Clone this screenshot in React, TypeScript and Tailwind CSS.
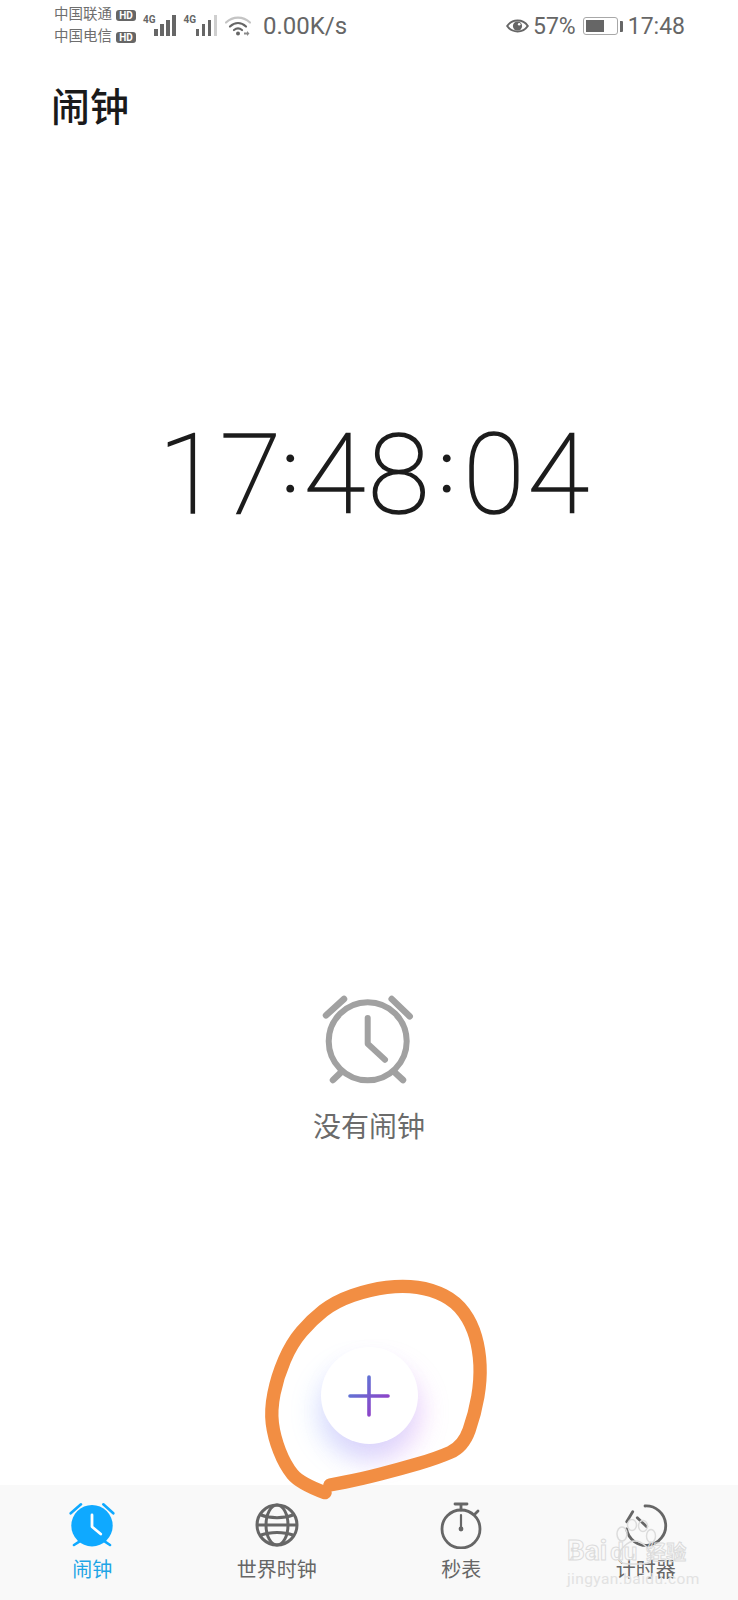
const CJK = "font-['Roboto','Noto_Sans_CJK_SC',sans-serif]";

function smooth(pts: number[][]) {
  let d = `M${pts[0][0]} ${pts[0][1]}`;
  for (let i = 1; i < pts.length - 1; i++) {
    const mx = (pts[i][0] + pts[i + 1][0]) / 2;
    const my = (pts[i][1] + pts[i + 1][1]) / 2;
    d += ` Q${pts[i][0]} ${pts[i][1]} ${mx} ${my}`;
  }
  const last = pts[pts.length - 1];
  return d + ` L${last[0]} ${last[1]}`;
}

const scribble = [
  [225, 668], [150, 640], [105, 585], [72, 500], [62, 420], [82, 320], [125, 220], [185, 150], [255, 95],
  [360, 58], [460, 46], [545, 58], [618, 95], [665, 160], [688, 240], [692, 330], [675, 430], [640, 530],
  [560, 565], [450, 597], [330, 628], [240, 645],
];

function Signal({ level }: { level: number }) {
  const hs = [7, 12, 16, 21];
  return (
    <div className="flex items-end gap-[2.5px] h-[21px]">
      {hs.map((h, i) => (
        <div
          key={h}
          className={i < level ? "w-[3.500px] bg-[#666666]" : "w-[3.500px] bg-[#cfcfcf]"}
          style={{ height: h }}
        />
      ))}
    </div>
  );
}

function Carrier({ name }: { name: string }) {
  return (
    <div className="flex items-center gap-[4px] h-[22px]">
      <span className="text-[14.5px] leading-none text-[#6e6e6e]">{name}</span>
      <span className="w-[20px] h-[11px] rounded-[3px] bg-[#666666] text-white text-[10px] leading-[11px] font-bold text-center">
        HD
      </span>
    </div>
  );
}

function StatusBar() {
  return (
    <div className="flex items-center justify-between h-[52px] pl-[54px] pr-[53px] text-[#666666]">
      <div className="flex items-center">
        <div className="flex flex-col">
          <Carrier name="中国联通" />
          <Carrier name="中国电信" />
        </div>
        <div className="flex items-start ml-[7px] h-[22px]">
          <span className="w-[11px] text-[10px] leading-[10px] font-bold">4G</span>
          <Signal level={4} />
          <span className="w-[12px] ml-[8px] text-[10px] leading-[10px] font-bold">4G</span>
          <Signal level={3} />
        </div>
        <svg className="ml-[8px]" width="26" height="20" viewBox="0 0 26 20" fill="none">
          <path d="M1 6.500C8 0 18 0 25 6.500" stroke="#c4c4c4" strokeWidth="2.200" strokeLinecap="round" />
          <path d="M5 10.500C10 6 16 6 21 10.500" stroke="#666666" strokeWidth="2.200" strokeLinecap="round" />
          <path d="M9 14C11.500 12 14.500 12 17 14" stroke="#666666" strokeWidth="2.200" strokeLinecap="round" />
          <circle cx="13" cy="17.500" r="2" fill="#666666" />
          <path d="M19 16.500h3v-1.500l2.500 2.500-2.500 2.500v-1.500h-3z" fill="#8a8a8a" />
        </svg>
        <span className="ml-[12px] text-[24px] leading-none">0.00K/s</span>
      </div>
      <div className="flex items-center">
        <svg width="23" height="16" viewBox="0 0 23 16" fill="none">
          <path d="M1.200 8C6 .8 17 .8 21.800 8 17 15.200 6 15.200 1.200 8Z" stroke="#666666" strokeWidth="2" />
          <circle cx="11.500" cy="8" r="4.600" fill="#666666" />
          <circle cx="13.200" cy="6.200" r="1.300" fill="#ffffff" />
        </svg>
        <span className="ml-[4px] text-[23px] leading-none">57%</span>
        <div className="ml-[7px] flex items-center">
          <div className="w-[35px] h-[18px] rounded-[3px] border border-[#a8a8a8] p-[2px]">
            <div className="w-[18px] h-full bg-[#666666]" />
          </div>
          <div className="ml-[2px] w-[3px] h-[11px] rounded-r-[1px] bg-[#666666]" />
        </div>
        <span className="ml-[5px] text-[23px] leading-none">17:48</span>
      </div>
    </div>
  );
}

function BigAlarm() {
  return (
    <svg width="100" height="100" viewBox="0 0 100 100" fill="none" stroke="#a1a1a1" strokeWidth="6" strokeLinecap="round" strokeLinejoin="round">
      <circle cx="48.700" cy="49.300" r="39" />
      <path d="M7 23.300 25 7M72.700 7 90.700 24.300M14 88l7.700-7.300M84 88l-8-7.300" strokeWidth="6.500" />
      <path d="M48.700 26v25.700L66 67.700" />
    </svg>
  );
}

function AlarmIcon() {
  return (
    <svg width="48" height="48" viewBox="0 0 48 48" fill="none" strokeLinecap="round" strokeLinejoin="round">
      <circle cx="24" cy="24.700" r="20.700" fill="#0fa9ff" />
      <path d="M2.700 12.300 13 3.300M35.300 3.300 45.300 12.300M6 44l5.300-3.300M42 44l-5-3.300" stroke="#0fa9ff" strokeWidth="2.600" />
      <path d="M24 14v11.700L32.700 33" stroke="#ffffff" strokeWidth="2.800" />
    </svg>
  );
}

function GlobeIcon() {
  return (
    <svg width="48" height="48" viewBox="0 0 48 48" fill="none" stroke="#666666" strokeWidth="3">
      <circle cx="24" cy="24" r="20" />
      <ellipse cx="24" cy="24" rx="11" ry="20" />
      <path d="M4 24h40M8 14C17 17.500 31 17.500 40 14M8 34C17 30.500 31 30.500 40 34" />
    </svg>
  );
}

function WatchIcon() {
  return (
    <svg width="48" height="48" viewBox="0 0 48 48" fill="none" stroke="#666666" strokeWidth="2.800" strokeLinecap="round">
      <circle cx="24" cy="28" r="19" />
      <path d="M18 3h12M24 3v6M38 13l3-3" />
      <path d="M24 14v14" strokeWidth="2.200" />
      <circle cx="24" cy="28" r="2.400" fill="#666666" stroke="none" />
    </svg>
  );
}

function TimerIcon() {
  return (
    <svg width="48" height="48" viewBox="0 0 48 48" fill="none" stroke="#666666" strokeWidth="2.800" strokeLinecap="round">
      <path d="M23 5A19.700 19.700 0 1 1 4.600 28" />
      <path d="M4.700 20.700 10.700 10.700M15.300 16.700l9.400 9" />
    </svg>
  );
}

function Tab({ label, active, icon }: { label: string; active?: boolean; icon: React.ReactNode }) {
  return (
    <div className="flex flex-col items-center pt-[16px]">
      {icon}
      <span className={active ? "mt-[7px] text-[20px] leading-[28px] text-[#1fa5e6]" : "mt-[7px] text-[20px] leading-[28px] text-[#666666]"}>
        {label}
      </span>
    </div>
  );
}

function Colon({ className }: { className?: string }) {
  return (
    <span className={`text-[70px] font-normal tracking-normal leading-none -translate-y-[21px] [-webkit-text-stroke:0px] ${className}`}>
      :
    </span>
  );
}

export default function App() {
  return (
    <div className={`relative flex flex-col w-[738px] h-[1600px] bg-white overflow-hidden ${CJK}`}>
      <StatusBar />

      <h1 className="mt-[31px] pl-[51px] text-[39px] leading-[50px] font-medium text-[#1a1a1a]">闹钟</h1>

      <div className="mt-[274px] pl-[12px] flex items-baseline justify-center text-[112px] leading-[136px] font-thin tracking-[3px] text-[#1c1c1c] [-webkit-text-stroke:1.6px_#1c1c1c]">
        <span className="tracking-[0.5px]">17</span>
        <Colon className="mr-[5px]" />
        <span>48</span>
        <Colon className="ml-[6px] mr-[8px]" />
        <span>04</span>
      </div>

      <div className="mt-[449px] flex flex-col items-center">
        <BigAlarm />
        <span className="mt-[16px] text-[28px] leading-[40px] text-[#6b6b6b]">没有闹钟</span>
      </div>

      <div className="mt-auto flex justify-center mb-[41px]">
        <button className="flex items-center justify-center w-[97px] h-[97px] rounded-full bg-white shadow-[-7px_16px_24px_rgba(120,175,255,0.22),7px_16px_24px_rgba(220,130,240,0.26)]">
          <svg width="42" height="42" viewBox="0 0 42 42" fill="none" strokeLinecap="round" strokeWidth="3.600">
            <defs>
              <linearGradient id="plus" gradientUnits="userSpaceOnUse" x1="2" y1="2" x2="40" y2="40">
                <stop offset="0" stopColor="#4f86d8" />
                <stop offset="1" stopColor="#a02fc4" />
              </linearGradient>
            </defs>
            <path d="M2 21h38" stroke="url(#plus)" />
            <path d="M21 2v38" stroke="url(#plus)" />
          </svg>
        </button>
      </div>

      <nav className="grid grid-cols-4 h-[115px] bg-[#f9f9f9]">
        <Tab label="闹钟" active icon={<AlarmIcon />} />
        <Tab label="世界时钟" icon={<GlobeIcon />} />
        <Tab label="秒表" icon={<WatchIcon />} />
        <Tab label="计时器" icon={<TimerIcon />} />
      </nav>

      {/* hand drawn circle on top of the screenshot */}
      <svg className="absolute left-[250px] top-[1270px]" width="250" height="240" viewBox="0 0 750 720" fill="none">
        <path d={smooth(scribble)} stroke="#f28e43" strokeWidth="40" strokeLinecap="round" strokeLinejoin="round" />
      </svg>

      {/* baidu watermark */}
      <div className="absolute left-[567px] top-[1519px] w-[135px] pointer-events-none">
        <svg className="absolute left-[46px] top-0" width="44" height="46" viewBox="0 0 44 46" fill="none" stroke="#dcdcdc" strokeWidth="1.500">
          <ellipse cx="9" cy="15" rx="5" ry="7" />
          <ellipse cx="19" cy="6" rx="4.500" ry="5.500" />
          <ellipse cx="30" cy="7" rx="4.500" ry="5.500" />
          <ellipse cx="38" cy="17" rx="4.500" ry="6.500" />
          <path d="M6 38C6 30 15 22 22 22s16 8 16 16c0 8-8 7-16 7S6 46 6 38Z" />
        </svg>
        <div className="relative mt-[17px] flex items-baseline text-transparent [-webkit-text-stroke:1px_#dcdcdc]">
          <span className="text-[28px] leading-[30px] font-bold">Bai</span>
          <span className="ml-[3px] text-[24px] leading-[30px] font-bold">du</span>
          <span className="ml-[9px] text-[20px] leading-[30px] font-bold">经验</span>
        </div>
        <div className="mt-[1px] text-[15.500px] leading-[20px] tracking-[0.4px] text-[#e2e2e2]">jingyan.baidu.com</div>
      </div>
    </div>
  );
}
